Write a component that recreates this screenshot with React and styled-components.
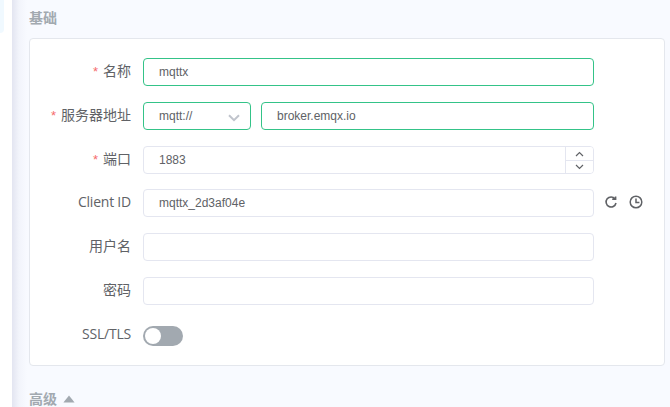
import React from 'react';
import styled, { createGlobalStyle, css } from 'styled-components';

const GlobalStyle = createGlobalStyle`
  * { box-sizing: border-box; }
  body {
    margin: 0;
    overflow: hidden;
    background: #f8faff;
    color: #606266;
    font-family: 'Open Sans', 'Noto Sans CJK SC', sans-serif;
  }
`;

const Page = styled.div`
  display: flex;
  width: 670px;
  height: 407px;
  overflow: hidden;
`;

const Sidebar = styled.aside`
  flex: 0 0 12px;
  background: #fff;
`;

const ActiveConnection = styled.div`
  width: 4px;
  height: 33px;
  background: #f0f9ff;
  border-bottom-right-radius: 6px;
`;

const Content = styled.main`
  flex: 1;
  min-width: 0;
  padding: 0 5px 0 17px;
  background: linear-gradient(to right, #e3e5f1 0, #e9ebf5 3px, #f2f4fb 7px, #f8faff 15px);
`;

const SectionTitle = styled.h3`
  display: flex;
  align-items: center;
  margin: 0;
  height: 38px;
  padding-bottom: 2px;
  font-size: 14px;
  line-height: 20px;
  font-weight: 700;
  color: #a2a9b0;
`;

const AdvancedTitle = styled(SectionTitle)`
  height: 16px;
  margin-top: 25px;
  padding: 0;
  gap: 6px;
  line-height: 16px;
`;

const Card = styled.section`
  width: 636px;
  height: 328px;
  padding: 19px 0 0;
  border: 1px solid #e4e7ed;
  border-radius: 4px;
  background: #fff;
`;

const Row = styled.div`
  display: grid;
  grid-template-columns: 101px 451px auto;
  column-gap: 12px;
  height: 28px;
  margin-bottom: ${({ $gap = 16 }) => $gap}px;
`;

const Label = styled.label`
  padding-top: 3px;
  text-align: right;
  white-space: nowrap;
  font-size: 14px;
  line-height: 20px;
`;

const LatinLabel = styled(Label)`
  letter-spacing: -0.22px;
`;

const Required = styled.span`
  margin-right: 5px;
  font-family: 'Liberation Sans', sans-serif;
  font-size: 13px;
  color: #f56c6c;
`;

const Field = styled.div`
  display: flex;
  height: 28px;
  padding-left: 15px;
  border: 1px solid ${({ $valid }) => ($valid ? '#34c388' : '#e4e6f0')};
  border-radius: 4px;
  background: #fff;
  overflow: hidden;
  font-family: 'Liberation Sans', sans-serif;
  font-size: 12px;
  line-height: 26px;
`;

const Address = styled.div`
  display: grid;
  grid-template-columns: 108px 333px;
  gap: 10px;
`;

const Select = styled(Field)`
  justify-content: space-between;
  align-items: center;
  padding-right: 9px;
`;

const Stepper = styled.div`
  display: flex;
  flex-direction: column;
  width: 28px;
  margin-left: auto;
  border-left: 1px solid #e4e6f0;
`;

const stepDivider = css`
  border-bottom: 1px solid #e4e6f0;
`;

const Step = styled.button`
  display: flex;
  align-items: center;
  justify-content: center;
  height: ${({ $up }) => ($up ? 14 : 12)}px;
  padding: 0;
  border: 0;
  background: #fff;
  color: #606266;
  ${({ $up }) => $up && stepDivider}
`;

const Actions = styled.div`
  display: flex;
  gap: 11px;
  margin-left: -2px;
  padding-top: 6px;
  color: #606266;
`;

const Switch = styled.div`
  width: 40px;
  height: 20px;
  margin-top: 5px;
  padding: 2px;
  border-radius: 10px;
  background: #a2a9b0;
`;

const Knob = styled.div`
  width: 16px;
  height: 16px;
  border-radius: 50%;
  background: #fff;
`;

const Icon = styled.svg`
  display: block;
  flex: none;
  fill: none;
  stroke: currentColor;
`;

const Chevron = styled(Icon)`
  margin-top: 3px;
  color: #c0c4cc;
`;

const Caret = styled(Icon)`
  fill: #a2a9b0;
  stroke: none;
`;

export default function App() {
  return (
    <>
      <GlobalStyle />
      <Page>
        <Sidebar><ActiveConnection /></Sidebar>
        <Content>
          <SectionTitle>基础</SectionTitle>
          <Card>
            <Row>
              <Label><Required>*</Required>名称</Label>
              <Field $valid>mqttx</Field>
            </Row>
            <Row>
              <Label><Required>*</Required>服务器地址</Label>
              <Address>
                <Select $valid>
                  mqtt://
                  <Chevron width="14" height="10" viewBox="0 0 14 10" strokeWidth="2">
                    <path d="M2 2.2 7 7.2 12 2.2" />
                  </Chevron>
                </Select>
                <Field $valid>broker.emqx.io</Field>
              </Address>
            </Row>
            <Row $gap={15}>
              <Label><Required>*</Required>端口</Label>
              <Field>
                1883
                <Stepper>
                  <Step $up aria-label="+">
                    <Icon width="9" height="6" viewBox="0 0 9 6" strokeWidth="1.2"><path d="M1 5 4.5 1.5 8 5" /></Icon>
                  </Step>
                  <Step aria-label="-">
                    <Icon width="9" height="6" viewBox="0 0 9 6" strokeWidth="1.2"><path d="M1 1 4.5 4.5 8 1" /></Icon>
                  </Step>
                </Stepper>
              </Field>
            </Row>
            <Row>
              <LatinLabel>Client ID</LatinLabel>
              <Field>mqttx_2d3af04e</Field>
              <Actions>
                <Icon width="14" height="14" viewBox="0 0 14 14" strokeWidth="1.6">
                  <path d="M11 3.8A5 5 0 1 0 12 8M8.2 4.3h3.4V1.4" />
                </Icon>
                <Icon width="14" height="14" viewBox="0 0 14 14" strokeWidth="1.5">
                  <circle cx="7" cy="7" r="5.8" />
                  <path d="M7 3.4v4h3.4" />
                </Icon>
              </Actions>
            </Row>
            <Row>
              <Label>用户名</Label>
              <Field />
            </Row>
            <Row>
              <Label>密码</Label>
              <Field />
            </Row>
            <Row>
              <LatinLabel>SSL/TLS</LatinLabel>
              <Switch><Knob /></Switch>
            </Row>
          </Card>
          <AdvancedTitle>
            高级
            <Caret width="12" height="8" viewBox="0 0 12 8"><path d="M6 .5 11.6 7.5H.4Z" /></Caret>
          </AdvancedTitle>
        </Content>
      </Page>
    </>
  );
}
